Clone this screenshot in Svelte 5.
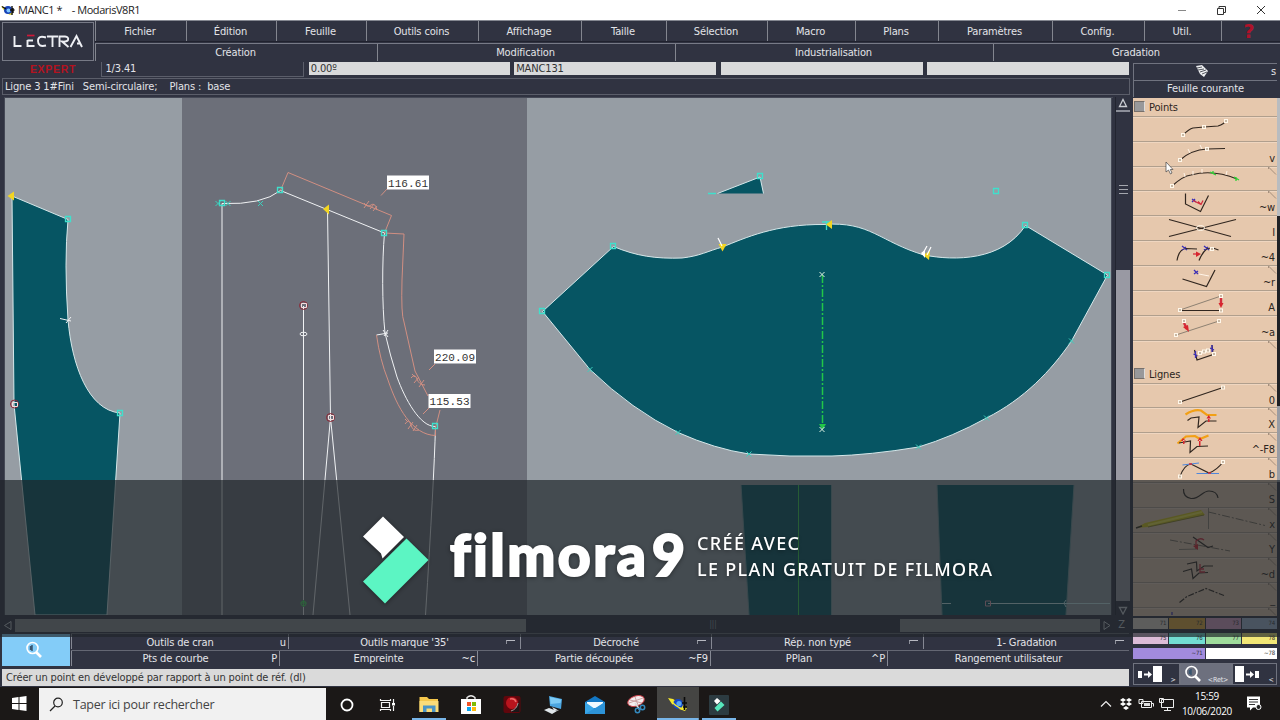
<script lang="ts">
    const menus = ['Fichier', 'Édition', 'Feuille', 'Outils coins', 'Affichage', 'Taille', 'Sélection', 'Macro', 'Plans', 'Paramètres', 'Config.', 'Util.'];
    const modes = ['Création', 'Modification', 'Industrialisation', 'Gradation'];

    const toolsTop = [
        { label: 'Outils de cran', key: 'u' },
        { label: "Outils marque '35'", mark: true },
        { label: 'Décroché', mark: true },
        { label: 'Rép. non typé', mark: true },
        { label: '1- Gradation', mark: true },
    ];
    const toolsBottom = [
        { label: 'Pts de courbe', key: 'P' },
        { label: 'Empreinte', key: '~c' },
        { label: 'Partie découpée', key: '~F9' },
        { label: 'PPlan', key: '^P' },
        { label: 'Rangement utilisateur' },
    ];

    // k = ink, g = grey, r = red, b = blue, o = orange, dots = white handles
    const points = [
        { k: 'M50 19Q56 13 60 12L71 11L85 10Q91 8 93 5', dots: [[50, 19], [71, 11], [93, 5]] },
        { key: 'v', k: 'M47 19Q58 9 74 8L92 7.5', w: 'M55 8l2 4M67 4l2 4', dots: [[47, 19], [74, 8]] },
        { corner: true, k: 'M39 20Q50 10 58 9Q80 3 104 13', w: 'M51 7l1 4M60 5v4M69 3v4M94 5l-1 4', green: 'M77 6l6 3M80 5v3M101 11l5 3M103 11v4', dots: [[39, 20]] },
        { key: '~w', corner: true, k: 'M52.500 3.500V14L67.500 21.500L75.500 5.500', r: 'M60 10.500L68 14.500l2-4M68 14.500l-3-3', b: 'M59 9l4 3M59 12l3-3' },
        { key: 'I', k: 'M36 4.500L98 21.500M36 21.500L103 4.500', ring: true },
        { key: '~4', k: 'M44 20.500Q46 9 53 8.500L64 9M66 20.500Q69 13 74 8.500L80 8L85.500 10', r: 'M60 14h5', fillr: 'M63 11.500l5 2.500l-5 3z', b: 'M49 6l5 4M49 10l4-3M71 6l5 4M71 10l4-3', dots: [[79, 9]] },
        { key: '~r', corner: true, k: 'M49.500 14L73.500 21.500L82 5', b: 'M61 5l4 4M61 9l4-3', w: 'M66 9l10 2' },
        { key: 'A', g: 'M47 20L88 6', k: 'M47 20.500H88', r: 'M88 8v6', fillr: 'M85.500 13h5l-2.500 5z', wide: true, dots: [[47, 20], [88, 20.500], [88, 6]] },
        { key: '~a', g: 'M43 20L86 6', r: 'M51 8l3 6', fillr: 'M50 12l5-2l1 7z', wide: true, dots: [[43, 20], [86, 6], [51, 6]] },
        { corner: true, k: 'M61.500 10L64 20L80 14.500L79 5', b: 'M60.500 14l4 2M62.500 11v7M77 8l4 2M79 5v7', dots: [[67, 13], [71, 11.500], [75, 10.500], [81, 14]] },
    ];
    const lines = [
        { key: '0', corner: true, k: 'M47 19L90 4.500', dots: [[47, 19], [90, 4.500]] },
        { key: 'X', corner: true, k: 'M54.500 13.500L58 11L66 10L65 20.500L73 14H83.500', o: 'M52.500 7.500Q61 2 68 3.500L74 8H83.500', fillr: 'M73.500 11.500h4.500l-2.300-3.500zM75 11h1.500v4h-1.500z' },
        { key: '^-F8', corner: true, k: 'M46 11L57.500 9L57 20.500L64 14.500L75 14', o: 'M44.500 11.500L53 4.500L62 4L67 7L75.500 3.500', fillr: 'M48 9h5l-3-3zM50 8h1.500v4h-1.500zM64.500 9h5l-2.500-4zM66 8h1.500v6h-1.500z' },
        { key: 'b', corner: true, k: 'M47 19.500Q51 8 58 7L76 16Q84 13 90 5', b2: 'M49.500 8L66 6M63.500 16.500H86', r: 'M56 7h3M75 16h3', dots: [[47, 19.500], [90, 5]] },
        { key: 'S', corner: true, k: 'M50.500 7Q50 15 58 16.500C67 17 69 9 76 9Q84 9 85 16' },
        { key: 'x', corner: true, pencil: true, g: 'M75.500 1V22', dash: 'M75.500 5L132 18.500' },
        { key: 'Y', corner: true, g: 'M46 17.500L65 17', dash: 'M37 8L97 19', k: 'M60 5L75 15.500L80 14', r: 'M63 17V9Q67 5 71 8', fillr: 'M60 14l5-2v6z' },
        { key: '~d', corner: true, k: 'M54 7L63.500 5L64 14L71 9H80M50 14.500L58.500 12L60 21.500L66 16L75 15.500', r: 'M67 7v5h4M67 12v3h5' },
        { key: '_', corner: true, kd: 'M46.500 20.500L54 14.500L73 6.500L91 13.500' },
        { corner: true, b: 'M39 5v3' },
    ];

    const swatches = [
        ['71', '#e6d8cc'], ['72', '#e8ac3c'], ['73', '#dda0c8'], ['74', '#a4b8d4'],
        ['75', '#dcbcd8'], ['76', '#72ddd2'], ['77', '#9fdc9c'], ['78', '#f2e776'],
    ];

    const anchors = [[280.5, 190.500], [384.500, 233], [435.500, 426.500], [68, 219.500], [120, 413], [760, 176.500], [996.500, 191.500], [613.500, 246.500], [1025.500, 225.500], [542.500, 311.500], [1107.500, 275]];
    const redAnchors = [[303.500, 305.500], [330.500, 417.500], [14.500, 404]];
    const crosses = [[590, 369.500], [678, 432.500], [749, 454], [918.500, 447], [986.500, 418], [1071.500, 341], [260.500, 203.500], [218, 203.500], [228, 203.500]];
</script>

{#snippet toolRow(item)}
    <div class="tool">
        <svg width="144" height="25" viewBox="0 0 144 25">
            {#if item.pencil}
                <path d="M3 21L12 16L68 3L72 8L15 20Z" fill="#d8c814" />
                <path d="M15 18L69 5" stroke="#f2e94c" stroke-width="2" />
                <path d="M3 21L9 19" stroke="#382c20" stroke-width="1.500" />
                <path d="M15 20L71 8" stroke="#8c8226" />
            {/if}
            {#if item.g}<path d={item.g} stroke="#8d8172" />{/if}
            {#if item.dash}<path d={item.dash} stroke="#776a5c" stroke-dasharray="8 2 2 2" />{/if}
            {#if item.o}<path d={item.o} stroke="#f2a015" stroke-width="2.200" />{/if}
            {#if item.k}<path d={item.k} stroke="#30261f" stroke-width="1.200" />{/if}
            {#if item.kd}<path d={item.kd} stroke="#30261f" stroke-width="1.200" stroke-dasharray="6 1.500 2 1.500" />{/if}
            {#if item.w}<path d={item.w} stroke="#fff4e8" />{/if}
            {#if item.b2}<path d={item.b2} stroke="#4f87dc" stroke-width="1.200" />{/if}
            {#if item.b}<path d={item.b} stroke="#3b2fb5" stroke-width="1.300" />{/if}
            {#if item.green}<path d={item.green} stroke="#2fd235" stroke-width="1.300" />{/if}
            {#if item.r}<path d={item.r} stroke="#d32c3c" stroke-width={item.wide ? 2.4 : 1.3} />{/if}
            {#if item.fillr}<path d={item.fillr} fill="#d8252e" />{/if}
            {#if item.ring}<ellipse cx="67.500" cy="13" rx="4" ry="2.500" stroke="#fff7ea" />{/if}
            {#each item.dots ?? [] as [x, y]}
                <rect x={x - 1.5} y={y - 1.5} width="3" height="3" fill="#c8b8a4" stroke="#fff7ea" />
            {/each}
            {#if item.corner}<path d="M135.500 1L143 8.500M135.500 1V3" stroke="#a58f7c" />{/if}
        </svg>
        <span>{item.key ?? ''}</span>
    </div>
{/snippet}

{#snippet bottomCell(item)}
    <div class="cell">
        <span class="label">{item.label}</span>
        {#if item.mark}
            <i class="mark"></i>
        {:else}
            <span class="key">{item.key ?? ''}</span>
        {/if}
    </div>
{/snippet}

{#snippet magnifier()}
    <svg width="18" height="18" viewBox="0 0 18 18">
        <path d="M11 11L16 16" stroke="#fff" stroke-width="2.600" />
        <circle cx="7.500" cy="7" r="5.500" stroke="#fff" stroke-width="1.600" />
        <path d="M7 4v6M5.500 5v4" stroke="#3a5670" stroke-width="1.500" />
    </svg>
{/snippet}

<div class="screen">
    <header class="titlebar">
        <svg width="14" height="11" viewBox="0 0 14 11">
            <path d="M0 1L5 3L12 9L9 10L4 7Z" fill="#e4d82e" />
            <circle cx="7" cy="5" r="4" fill="#1743b8" />
            <circle cx="7.500" cy="5.500" r="2" fill="#7fc7ff" />
            <path d="M1 1.500L5 4M11 1V10M9 5h4.500M12 3v5" stroke="#111" stroke-width="1.400" />
        </svg>
        <span class="title">MANC1 *&nbsp;&nbsp;&nbsp; - ModarisV8R1</span>
        <svg class="controls" width="96" height="12" viewBox="0 0 96 12">
            <path d="M2 6.500h8" stroke="#888" />
            <path d="M41.500 4.500h6v6h-6zM43 4V2.500h6.500v6H48" stroke="#333" />
            <path d="M81 2L89 10M89 2L81 10" stroke="#333" />
        </svg>
    </header>

    <div class="menus">
        <div class="logo">
            <svg width="74" height="18" viewBox="0 0 74 18">
                <g stroke="#eef0f4" stroke-width="1.900">
                    <path d="M3.500 4V14H10.500" />
                    <path d="M16.500 8.500H22M16.500 8V14H23.500" />
                    <path d="M35 5.500Q27 3 27 9Q27 15.500 35 13.500" />
                    <path d="M36 4.500H47M41.500 4.500V15" />
                    <path d="M48.500 15V4.500H54Q58 5 57 8Q56 10 51 9.500L57.500 15" />
                    <path d="M59.500 15L65.500 4L71 15M66 11.500H69" />
                </g>
                <path d="M16 3.500H23.500" stroke="#cf1838" stroke-width="1.700" />
            </svg>
        </div>
        <nav class="menu-top">
            {#each menus as menu}
                <span>{menu}</span>
            {/each}
            <span class="help">?</span>
        </nav>
        <nav class="menu-modes">
            {#each modes as mode}
                <span>{mode}</span>
            {/each}
        </nav>
    </div>

    <div class="body">
        <main class="work">
            <div class="fields">
                <span class="expert">EXPERT</span>
                <span class="scale">1/3.41</span>
                <span class="field">0.00º</span>
                <span class="field">MANC131</span>
                <span class="field"></span>
                <span class="field"></span>
            </div>
            <div class="info">Ligne 3 1#Fini&nbsp;&nbsp; Semi-circulaire;&nbsp;&nbsp;&nbsp; Plans :&nbsp; base</div>

            <div class="drawing">
                <svg class="canvas" width="1109" height="518" viewBox="4 97 1109 518">
                    <rect x="4" y="97" width="1108" height="518" fill="#969da4" />
                    <rect x="182" y="97" width="345" height="518" fill="#6c6f79" />
                    <path d="M4 97.500H1113M4.500 97V615M1111.500 97V615" stroke="#454956" />

                    <g fill="#065563" stroke="#d5e8ea">
                        <path d="M12 196L68 219.500Q64 262 68 320C72 365 88 410 120 413L107 615H35L14 404Z" />
                        <path d="M542.500 311.500L613.500 246.500C636 256 656 259 682 258C700 256 708 251 722.500 247C745 238 775 224 824 224.500C870 221 880 242 924 255C955 261 1002 261 1025.500 225.500L1107.500 275L1071.500 341C1051 371 1024 399 986.500 418Q952 437 918.500 447Q870 455 832 456H790L749 454Q715 449 678 432.500Q632 410 590 369.500Z" />
                    </g>
                    <path d="M717.500 193.500L760 177L763.500 193.500Z" fill="#065563" />
                    <path d="M717.500 193.500L760 177L763.500 193.500" stroke="#d5e8ea" />
                    <g fill="#065563">
                        <path d="M741 485H831V615H749Z" />
                        <path d="M937 485H1074L1066 615H942Z" />
                    </g>
                    <path d="M741 485L749 615M831.500 485V615M937 485L942 615M1074 485L1066 615" stroke="#6f9498" />
                    <path d="M798.500 485V615" stroke="#39d64a" />
                    <path d="M942 603.500H951M988 603.500H1110M1066 600l-2 3l2 4" stroke="#c5e8eb" />
                    <path d="M985.500 601h5v5h-5z" stroke="#e0a0b0" />

                    <!-- front bodice -->
                    <g stroke="#f0f2f4">
                        <path d="M222 615V203.500Q262 205 280.500 190.500L384.500 233C382 262 382 305 385 333Q390 355 397 377C405 399 420 427 435.500 426.500Q434 480 425.500 615" />
                        <path d="M327.500 209.500L330.500 417.500L313 615M330.500 417.500L350 615" />
                        <path d="M303.500 306V615" />
                        <ellipse cx="303.500" cy="334" rx="3.500" ry="1.800" />
                        <path d="M376.500 335L388 333M383 330l5 7M388 330l-4 6" />
                        <path d="M60 318.500L71 321M66 323l5-6" />
                    </g>
                    <path d="M300.500 603h6M303.500 600v7" stroke="#49e861" />
                    <circle cx="303.500" cy="603.500" r="2.500" stroke="#49e861" />

                    <!-- measures -->
                    <g stroke="#d18f82">
                        <path d="M280.500 190.500L288 172.500L391.500 215.500L384.500 233L404 234L402 280Q401 315 404 322L415 371L428 396" />
                        <path d="M376.500 335Q380 360 388 380C397 407 412 435 435.500 435.500V428L440 410" />
                        <path d="M381 195.500L387 189M429 370L435 364M423 414L429 408" />
                        <path d="M364 203q3 5 7 2t6 5M364 208l5-7M370 209l4-5M373 211l4-5" />
                        <path d="M411 378q4-5 6 1t8 6M414 383l5-6M419 387l5-7M412 374l3 3" />
                        <path d="M405 424q4-6 6 1t8 5M408 429l5-7M413 431l4-6M405 419l3 3" />
                    </g>

                    <g stroke="#3fe0cc" stroke-width="1.300">
                        {#each anchors as [x, y]}
                            <path d={`M${Math.floor(x) - 2.5} ${Math.floor(y) - 2.5}h5v5h-5z`} />
                        {/each}
                        <path d="M219.500 200.500h5v5h-5zM708 193.500h8M822 222h8M826.500 221v9" />
                    </g>
                    <g stroke="#3ccfbd">
                        {#each crosses as [x, y]}
                            <path d={`M${x - 2.5} ${y - 2.5}l5 5m0-5l-5 5`} />
                        {/each}
                    </g>
                    {#each redAnchors as [x, y]}
                        <circle cx={x} cy={y} r="4" stroke="#8e2634" />
                        <path d={`M${x - 2} ${Math.floor(y) - 1.5}h5v4h-5z`} stroke="#f4dede" />
                    {/each}

                    <!-- notches -->
                    <g fill="#f2d521">
                        <path d="M323 209l6-4.500v10z" />
                        <path d="M7.500 196l6.500-4.500v9z" />
                        <path d="M718.500 244h8l-4 7.500z" />
                        <path d="M826 224.500l6-4.500v9z" />
                        <path d="M923 255l7-4l-1 9z" />
                    </g>
                    <path d="M921 253l4-3v8z" fill="#fff" />
                    <path d="M718 238l4 8M927 246l-5 9M931 247l-4 8" stroke="#fff" stroke-width="1.200" />

                    <path d="M822.500 275V425" stroke="#22c648" stroke-dasharray="8 2 2 2" stroke-width="1.500" />
                    <path d="M819 424h7l-3.500 6z" fill="#22c648" />
                    <path d="M819.500 272l5 5m0-5l-5 5M819.500 427l5 5m0-5l-5 5" stroke="#dff4e4" />

                    <g class="measure">
                        <rect x="387" y="175.500" width="42" height="14" />
                        <rect x="434" y="349.500" width="42" height="14" />
                        <rect x="428.500" y="394" width="42" height="14" />
                        <text x="388" y="186.500" textLength="40">116.61</text>
                        <text x="435" y="360.500" textLength="40">220.09</text>
                        <text x="429.500" y="405" textLength="40">115.53</text>
                    </g>
                </svg>

                <div class="vscroll">
                    <svg width="14" height="13" viewBox="0 0 14 13"><path d="M3.500 9.500L7 2.500L10.500 9.500Z" stroke="#c9ccd2" stroke-width="1.300" /></svg>
                    <div class="vtrack"><i class="grip"></i></div>
                    <div class="vthumb"></div>
                    <svg width="14" height="14" viewBox="0 0 14 14"><path d="M3.500 6.500H10.500L7 13Z" stroke="#c9ccd2" stroke-width="1.300" /></svg>
                </div>
            </div>

            <div class="hscroll">
                <svg width="13" height="13" viewBox="0 0 13 13"><path d="M9 2.500V10.500L2.500 6.500Z" stroke="#c9ccd2" /></svg>
                <div class="hbar"></div>
                <div class="hgap">|||</div>
                <div class="hbar"></div>
                <svg width="14" height="13" viewBox="0 0 14 13"><path d="M4 2.500V10.500L10 6.500Z" stroke="#c9ccd2" /></svg>
                <span class="zed">Z</span>
            </div>

            <div class="toolbar">
                <div class="zoom">{@render magnifier()}</div>
                <div class="cells top">
                    {#each toolsTop as item}{@render bottomCell(item)}{/each}
                </div>
                <div class="cells bottom">
                    {#each toolsBottom as item}{@render bottomCell(item)}{/each}
                </div>
            </div>
            <div class="message">Créer un point en développé par rapport à un point de réf. (dl)</div>
        </main>

        <aside class="side">
            <div class="head">
                <svg width="14" height="14" viewBox="0 0 14 14">
                    <path d="M1 2L7 1L13 7L9 13L5 10Z" fill="#eef0f2" />
                    <path d="M2 4l5-1M3 6l6-1M5 8l6-2M7 10l5-2" stroke="#55585f" />
                </svg>
                <span>s</span>
            </div>
            <div class="head">Feuille courante</div>
            <div class="tools">
                <h3><i></i>Points</h3>
                {#each points as item}{@render toolRow(item)}{/each}
                <h3><i></i>Lignes</h3>
                {#each lines as item}{@render toolRow(item)}{/each}
            </div>
            <div class="swatches">
                {#each swatches as [code, color]}
                    <span style="background: {color}">{code}</span>
                {/each}
            </div>
            <div class="swatches wide">
                <span class="violet">~71</span>
                <span class="white">~78</span>
            </div>
            <div class="sheets">
                <div>
                    <svg width="26" height="17" viewBox="0 0 26 17"><path d="M1 5h4v7h-4zM16 0h9v16h-9zM11 5l4 3.500l-4 3.500zM7 7.500h4v2h-4z" fill="#fff" /></svg>
                    <small>&gt;</small>
                </div>
                <div class="on">{@render magnifier()}<small>&lt;Ret&gt;</small></div>
                <div>
                    <svg width="26" height="17" viewBox="0 0 26 17"><path d="M0 0h9v16h-9zM20 5h4v7h-4zM15 5l4 3.500l-4 3.500zM11 7.500h4v2h-4z" fill="#fff" /></svg>
                    <small>&lt;</small>
                </div>
            </div>
        </aside>
        <div class="edge"></div>
    </div>

    <footer class="taskbar">
        <div class="start">
            <svg width="15" height="15" viewBox="0 0 15 15"><path d="M0 2L6.500 1V7H0zM7.500 1L14.500 0V7H7.500zM0 8H6.500V14L0 13zM7.500 8H14.500V15L7.500 14z" fill="#fff" /></svg>
        </div>
        <div class="search">
            <svg width="15" height="15" viewBox="0 0 15 15"><circle cx="9" cy="5.500" r="4.300" stroke="#222" stroke-width="1.200" /><path d="M6 9L1 14" stroke="#222" stroke-width="1.300" /></svg>
            <span>Taper ici pour rechercher</span>
        </div>
        <div class="apps">
            <div class="app"><svg viewBox="0 0 22 22"><circle cx="11" cy="11" r="5.500" stroke="#fff" stroke-width="1.800" /></svg></div>
            <div class="app">
                <svg viewBox="0 0 22 22"><path d="M4.500 8.500h8v5h-8zM3.500 5v1.500h10V5M3.500 17v-1.500h10V17M16.500 5v4M16.500 12v5" stroke="#f2f2f2" stroke-width="1.200" /><path d="M15 9h3v2.500h-3z" fill="#fff" /></svg>
            </div>
            <div class="app open">
                <svg viewBox="0 0 22 22"><path d="M1.500 3H9l2 2h9V18H1.500Z" fill="#f5c74c" /><path d="M1.500 7H20.500V18H1.500Z" fill="#fbdc79" /><path d="M5 18V11.500H17.500V18H14V14.500H8.500V18Z" fill="#4a94c6" /></svg>
            </div>
            <div class="app">
                <svg viewBox="0 0 22 22"><path d="M7 6V3.500Q11 0 15 3.500V6" stroke="#eee" stroke-width="1.300" /><path d="M1 5H21V20H1Z" fill="#fff" /><path d="M7 8h4v4H7z" fill="#f15325" /><path d="M12 8h4v4h-4z" fill="#80bb03" /><path d="M7 13h4v4H7z" fill="#08a6f0" /><path d="M12 13h4v4h-4z" fill="#febb0b" /></svg>
            </div>
            <div class="app">
                <svg viewBox="0 0 22 22"><rect x="2.500" y="2" width="17" height="17" rx="2" fill="#60060c" /><circle cx="11" cy="9" r="6" fill="#b8141d" /><path d="M9 5q5-1 6 3" stroke="#ef6a6a" stroke-width="1.500" /><path d="M9 18Q17 16 18.500 5V18Z" fill="#1c1718" /><path d="M10 17Q16 15 17 9" stroke="#999" /></svg>
            </div>
            <div class="app">
                <svg viewBox="0 0 22 22"><path d="M6 2L19 5L18 15L7 12Z" fill="#4ba5e0" /><path d="M7 3L18 5.500L17.500 9L7.500 10Z" fill="#7ecbf5" /><path d="M1 16L6 14L14 17L9 20ZM9 13L13 15L16 17L11 16Z" fill="#e0e6ea" /></svg>
            </div>
            <div class="app">
                <svg viewBox="0 0 22 22"><path d="M1 8L11 2L21 8V20H1Z" fill="#1377c4" /><path d="M3 8H19V14H3Z" fill="#f2faff" /><path d="M1 8L11 15L21 8V20H1Z" fill="#39a6e8" /><path d="M1 20L13 13L21 8V20Z" fill="#2d93d8" /></svg>
            </div>
            <div class="app">
                <svg viewBox="0 0 22 22"><ellipse cx="11" cy="7" rx="8.500" ry="5" transform="rotate(-18 11 7)" fill="#f5eeee" stroke="#c8434b" /><path d="M4 9L18 4M10 3l3 8M5 6l12 3" stroke="#cda2a4" /><path d="M10 9L15 16" stroke="#ddd" stroke-width="1.500" /><circle cx="12.500" cy="16.500" r="2.200" stroke="#3489be" stroke-width="1.500" /><circle cx="17.500" cy="13.500" r="2.200" stroke="#3489be" stroke-width="1.500" /></svg>
            </div>
            <div class="app open active">
                <svg viewBox="0 0 22 22"><path d="M1 4L6 5L20 14L18 17L12 15L5 10Z" fill="#f6ea2e" /><circle cx="11" cy="10" r="5" fill="#1648c4" /><circle cx="12" cy="9.500" r="2.600" fill="#58a8f5" /><path d="M4 6Q8 13 17 15.500" stroke="#f6ea2e" stroke-width="1.500" /><path d="M17.500 3V16M15 9h5M16 13h4" stroke="#0a0a0a" stroke-width="1.600" /></svg>
            </div>
            <div class="app open">
                <svg viewBox="0 0 22 22"><rect x="1" y="1" width="20" height="20" rx="1" fill="#2c3b41" /><path d="M9 4L12.500 7L9 10.500L6 7Z" fill="#fff" /><path d="M13 7.500L16.500 11L9.500 17.500L6.500 14Z" fill="#57e7bd" /></svg>
            </div>
        </div>
        <svg class="tray" width="82" height="20" viewBox="0 0 82 20">
            <path d="M4 12.500L9 7.500L14 12.500" stroke="#eee" stroke-width="1.200" />
            <path d="M26 4l3 2l-3 2l-3-2zM32 4l3 2l-3 2l-3-2zM26 8l3 2l-3 2l-3-2zM32 8l3 2l-3 2l-3-2zM29 12l3 2l-3 2l-3-2z" fill="#fff" />
            <path d="M44.500 7.500h10v6h-10zM55 9.500h1.500v3M42 5.500h4v4h-4z" stroke="#eee" /><path d="M47 9h6v3h-6z" fill="#ddd" />
            <path d="M64.500 5.500h12v8h-12zM67 16.500h7M70.500 14v2M62.500 4.500h4v4h-4z" stroke="#eee" />
        </svg>
        <div class="clock"><span>15:59</span><span>10/06/2020</span></div>
        <svg class="notes" width="17" height="17" viewBox="0 0 17 17">
            <path d="M1 1.500H14V12.500H7L4 15.500V12.500H1Z" fill="#fff" /><path d="M3 4.500h9M3 7h9M3 9.500h6" stroke="#333" />
            <circle cx="12.500" cy="12" r="2.500" fill="#222" stroke="#fff" />
        </svg>
    </footer>

    <svg class="watermark" width="1280" height="157" viewBox="0 480 1280 157">
        <rect y="480" width="1280" height="157" fill="#20262a" fill-opacity="0.690" />
        <g class="brand">
            <path d="M383 516.500L404 537L382.500 558.500L381 553.500L363 536.500Z" fill="#fff" />
            <path d="M406.500 538.500L428.500 560L385 603.500L363 581.500Z" fill="#5cf5c3" />
            <text class="name" x="450" y="576" textLength="196">filmora</text>
            <text class="nine" x="652" y="576">9</text>
            <text class="claim" x="697" y="550" textLength="102">CRÉÉ AVEC</text>
            <text class="claim" x="697" y="576" textLength="295">LE PLAN GRATUIT DE FILMORA</text>
        </g>
    </svg>

    <svg class="pointer" width="9" height="14" viewBox="0 0 9 14">
        <path d="M1 1V11L3.500 9L5.500 13L7 12L5.300 8.500H8Z" fill="#fff" stroke="#444" stroke-width="0.700" />
    </svg>
</div>

<style>
    :global(body) {
        background: #303341;
    }

    .screen {
        position: relative;
        width: 1280px;
        height: 720px;
        overflow: hidden;
        display: flex;
        flex-direction: column;
        background: #303341;
        color: #e3e4e8;
        font-family: 'DejaVu Sans Condensed', 'DejaVu Sans', sans-serif;
        font-stretch: condensed;
        font-size: 11px;
        letter-spacing: -0.140px;
        white-space: nowrap;
    }

    svg {
        display: block;
        fill: none;
        flex: none;
        letter-spacing: 0;
    }

    .titlebar {
        height: 20px;
        box-sizing: border-box;
        padding: 0 8px 0 1px;
        display: flex;
        align-items: center;
        gap: 3px;
        background: #fff;
        color: #222;
        font: 11px 'Open Sans', sans-serif;
        letter-spacing: -0.450px;
    }

    .title {
        margin-top: -2px;
    }

    .controls {
        margin-left: auto;
    }

    .menus {
        height: 41px;
        display: grid;
        grid-template-columns: 93px 1fr;
        grid-template-rows: 22px 19px;
        padding-left: 2px;
        border-top: 1px solid #858891;
        box-sizing: border-box;
    }

    .logo {
        grid-row: 1 / 3;
        display: grid;
        place-items: center;
        border: 1px solid #777a86;
        margin: 1px 1px 1px 0;
        padding-bottom: 2px;
    }

    .menu-top,
    .menu-modes {
        display: grid;
    }

    .menu-top {
        grid-template-columns: 91px 90px 90px 112px 103px 85px 101px 88px 83px 114px 92px 77px 1fr;
        height: 20px;
        border-bottom: 1px solid #20222e;
    }

    .menu-modes {
        grid-template-columns: 282px 298px 318px 1fr;
        border-top: 1px solid #777a86;
        height: 17px;
    }

    .menus nav span {
        border-left: 1px solid #83868f;
        padding-right: 2px;
        text-align: center;
        line-height: 22px;
        height: 20px;
    }

    .menus .menu-modes span {
        line-height: 17px;
        height: 17px;
    }

    .menus nav .help {
        color: #b0122a;
        padding-right: 4px;
        font: bold 19px/20px 'DejaVu Sans', sans-serif;
    }

    .body {
        height: 626px;
        display: grid;
        grid-template-columns: 1131px 146px 3px;
    }

    .work {
        display: flex;
        flex-direction: column;
        min-width: 0;
    }

    .fields {
        display: grid;
        grid-template-columns: 99px 199px 201px 202px 202px 202px;
        column-gap: 4.400px;
        height: 15px;
        padding: 1px 0 0 2px;
        line-height: 14px;
    }

    .expert {
        color: #b5121f;
        text-align: center;
        padding-left: 3px;
        font: bold 10.500px/14px 'Liberation Sans', sans-serif;
        letter-spacing: 0.700px;
    }

    .scale {
        border: 1px solid #5b5e6a;
        border-top: 0;
        padding-left: 3px;
        margin-left: -4px;
    }

    .field {
        background: #d9dadb;
        color: #333;
        padding-left: 2px;
        height: 13px;
        line-height: 13px;
    }

    .info {
        height: 17px;
        line-height: 15px;
        margin: 1px 1px 2px 2px;
        padding-left: 2px;
        border: 1px solid #5b5e6a;
        box-sizing: border-box;
    }

    .drawing {
        display: flex;
        height: 518px;
        padding-left: 4px;
        background: #303341;
    }

    .measure rect {
        fill: #fff;
    }

    .measure text {
        font: 11px 'Liberation Mono', monospace;
        fill: #333;
    }

    .vscroll {
        width: 14px;
        margin-left: 2px;
        display: flex;
        flex-direction: column;
        border-left: 1px solid #222530;
        overflow: hidden;
    }

    .vtrack {
        height: 158px;
        border-top: 2px solid #8c8f99;
        display: grid;
        place-items: center;
    }

    .grip {
        width: 9px;
        height: 9px;
        margin-bottom: 4px;
        background: repeating-linear-gradient(#a4a7ae 0 1px, transparent 1px 4px);
    }

    .vthumb {
        flex: 1;
        background: #9999a3;
    }

    .hscroll {
        display: grid;
        grid-template-columns: 13px 511px 374px 200px 14px 15px;
        height: 12px;
        margin: 4px 0 2px 2px;
    }

    .hbar {
        background: #8a8d93;
    }

    .hgap,
    .zed {
        text-align: center;
        font-size: 8px;
        line-height: 12px;
        color: #9a9da8;
    }

    .zed {
        font-size: 11px;
        color: #c9ccd2;
    }

    .toolbar {
        display: grid;
        grid-template-columns: 68px 1fr;
        grid-template-rows: 16px 16px;
        column-gap: 1px;
        row-gap: 1px;
        padding: 0 2px;
    }

    .zoom {
        grid-row: 1 / 3;
        display: grid;
        place-items: center;
        background: #83ccf8;
        padding-right: 4px;
        border-top: 1px solid #303341;
    }

    .cells {
        display: grid;
        border-top: 1px solid #646773;
    }

    .cells.top {
        grid-template-columns: 217px 232px 191px 212px 1fr;
    }

    .cells.bottom {
        grid-template-columns: 208px 198px 233px 177px 1fr;
    }

    .cell {
        display: grid;
        grid-template-columns: 1fr auto 1fr;
        height: 15px;
        border-left: 1px solid #858893;
        line-height: 15px;
    }

    .top .cell {
        line-height: 17px;
    }

    .cell .label {
        grid-column: 2;
    }

    .cell .key {
        justify-self: end;
        padding-right: 2px;
    }

    .mark {
        justify-self: end;
        width: 9px;
        height: 4px;
        margin: 6px 5px 0 0;
        border-top: 1px solid #b6b8c0;
        border-left: 1px solid #8c8f99;
        box-sizing: border-box;
    }

    .message {
        height: 17px;
        line-height: 17px;
        margin: 3px 2px 0;
        padding-left: 4px;
        background: #dadada;
        color: #333;
    }

    .side {
        display: flex;
        flex-direction: column;
        padding: 2px 0 0 2px;
        box-sizing: border-box;
        min-width: 0;
    }

    .head {
        height: 17px;
        line-height: 16px;
        box-sizing: border-box;
        border: 1px solid #70737f;
        border-right: 0;
        border-bottom: 0;
        text-align: center;
    }

    .head:first-child {
        display: grid;
        grid-template-columns: 1fr auto 1fr;
    }

    .head:first-child svg {
        grid-column: 2;
        margin-right: 8px;
    }

    .head:first-child span {
        justify-self: end;
        padding-right: 1px;
    }

    .tools {
        height: 518px;
        margin-top: 1px;
        overflow: hidden;
        background: #e6c8ad;
        color: #2c2520;
    }

    .tools h3 {
        display: flex;
        align-items: center;
        gap: 4px;
        height: 17.800px;
        margin: 0;
        padding: 2px 0 0 1px;
        box-sizing: border-box;
        font-size: 11px;
        font-weight: normal;
    }

    .tools h3 i {
        flex: none;
        width: 11px;
        height: 11px;
        background: #98989a;
        border: 1px solid #77706b;
        border-right-color: #ddd;
        margin-bottom: 2px;
        box-sizing: border-box;
    }

    .tool {
        display: grid;
        height: 24.900px;
        box-sizing: border-box;
        border-top: 1px solid #b09f8d;
        box-shadow: inset 0 1px #efd6c0;
    }

    .tool svg,
    .tool span {
        grid-area: 1 / 1;
    }

    .tool svg {
        margin-top: -1px;
    }

    .tool span {
        align-self: end;
        justify-self: end;
        padding-right: 2px;
        line-height: 14px;
    }

    .swatches {
        display: grid;
        grid-template-columns: repeat(4, 1fr);
        grid-template-rows: 11px 11px;
        gap: 4px 1px;
        margin-top: 2px;
        color: #333;
        font-size: 6px;
        line-height: 9px;
        text-align: right;
    }

    .swatches span {
        padding-right: 2px;
    }

    .swatches.wide {
        grid-template-columns: 1fr 1fr;
        grid-template-rows: 11px;
        margin-top: 4px;
    }

    .violet {
        background: #a28bdd;
    }

    .white {
        background: #fff;
    }

    .sheets {
        display: grid;
        grid-template-columns: 47px 52px 1fr;
        height: 22px;
        margin-top: 4px;
    }

    .sheets div {
        display: flex;
        align-items: center;
        justify-content: center;
        border: 1px solid #70737f;
        gap: 7px;
    }

    .sheets .on {
        background: #6d707e;
        gap: 6px;
    }

    .sheets small {
        align-self: end;
        font-size: 7px;
    }

    .edge {
        margin-top: 37px;
        background: linear-gradient(#b8bcc0 0 118px, #1f2125 118px 308px, #999ca3 308px 384px, #303341 384px);
    }

    .taskbar {
        display: flex;
        align-items: center;
        height: 33px;
        background: #1b1817;
        color: #fff;
        font-family: 'Open Sans', sans-serif;
        font-stretch: normal;
    }

    .start {
        width: 39px;
        display: grid;
        place-items: center;
    }

    .search {
        display: flex;
        align-items: center;
        gap: 9px;
        width: 287px;
        height: 32px;
        align-self: end;
        padding-left: 10px;
        box-sizing: border-box;
        background: #f1f1f1;
        color: #444;
        font-size: 12.500px;
        letter-spacing: -0.240px;
    }

    .apps {
        display: flex;
        align-self: stretch;
    }

    .app {
        width: 41.400px;
        display: grid;
        place-items: center;
        box-sizing: border-box;
        padding-top: 2px;
    }

    .app svg {
        width: 22px;
        height: 22px;
    }

    .open {
        background: linear-gradient(#78b5e8, #78b5e8) bottom / 34px 2px no-repeat;
    }

    .active {
        background-color: #454543;
        background-size: 100% 2px;
    }

    .tray {
        margin-left: auto;
    }

    .clock {
        width: 60px;
        margin-left: -2px;
        display: flex;
        flex-direction: column;
        align-items: center;
        font-size: 10px;
        line-height: 15px;
        letter-spacing: -0.300px;
    }

    .notes {
        margin: 0 17px 0 9px;
    }

    .watermark {
        position: absolute;
        left: 0;
        top: 480px;
    }

    .brand {
        filter: drop-shadow(0 1px 2px rgba(0, 0, 0, 0.4));
    }

    .brand text {
        fill: #fff;
    }

    .name,
    .nine {
        font: 900 57px Lato, sans-serif;
        font-variant-ligatures: none;
        stroke: #fff;
        stroke-width: 2px;
    }

    .claim {
        font: 500 18px 'Noto Sans', sans-serif;
    }

    .pointer {
        position: absolute;
        left: 1165px;
        top: 161px;
    }
</style>
